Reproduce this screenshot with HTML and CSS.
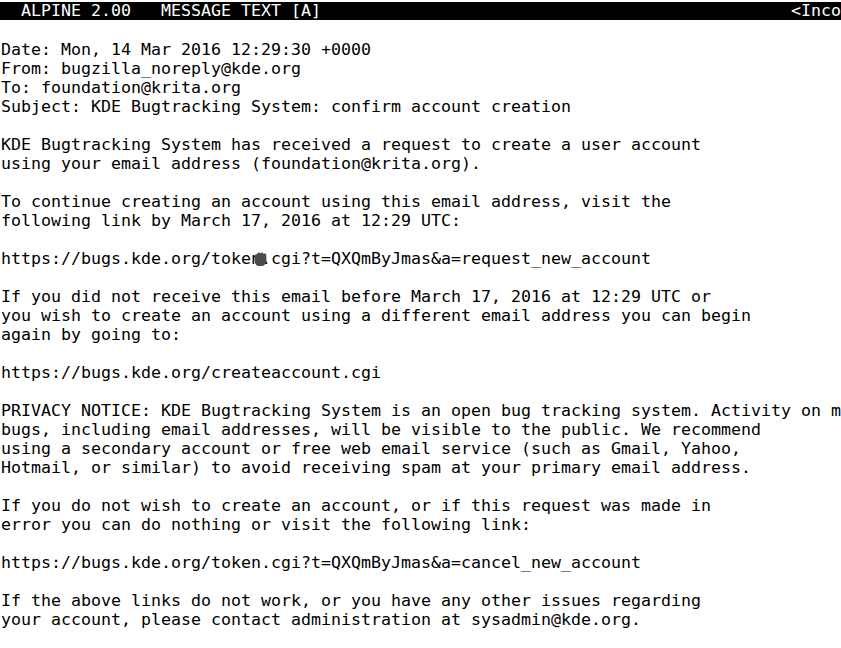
FILE: index.html
```html
<!DOCTYPE html>
<html>
<head>
<meta charset="utf-8">
<link rel="stylesheet" href="styles.css">
</head>
<body>
<div class="term">
<div class="titlebar"><span class="title">  ALPINE 2.00   MESSAGE TEXT [A]</span><span class="folder">&lt;Inco</span></div>
<div class="blank"></div>
<pre class="msg">Date: Mon, 14 Mar 2016 12:29:30 +0000
From: bugzilla_noreply@kde.org
To: foundation@krita.org
Subject: KDE Bugtracking System: confirm account creation

KDE Bugtracking System has received a request to create a user account
using your email address (foundation@krita.org).

To continue creating an account using this email address, visit the
following link by March 17, 2016 at 12:29 UTC:

https://bugs.kde.org/token<span class="cursor-host">.<svg class="cursor" width="17" height="17" viewBox="0 0 14 14" aria-hidden="true"><path d="M2.2 5.2 C2.2 3.6 3.6 3.2 4.2 3.6 C4.4 2 6.2 1.6 6.8 2.8 C7.4 1.6 9.2 1.8 9.4 3.2 C10.2 2.6 11.8 3 11.8 4.6 L11.9 8.6 C11.9 11.4 10 13.2 7.4 13.2 L6.4 13.2 C4.2 13.2 2.8 12 2.4 10.2 C2.1 9 2.2 7 2.2 5.2 Z" fill="#4b4b4b"/></svg></span>cgi?t=QXQmByJmas&amp;a=request_new_account

If you did not receive this email before March 17, 2016 at 12:29 UTC or
you wish to create an account using a different email address you can begin
again by going to:

https://bugs.kde.org/createaccount.cgi

PRIVACY NOTICE: KDE Bugtracking System is an open bug tracking system. Activity on m
bugs, including email addresses, will be visible to the public. We recommend
using a secondary account or free web email service (such as Gmail, Yahoo,
Hotmail, or similar) to avoid receiving spam at your primary email address.

If you do not wish to create an account, or if this request was made in
error you can do nothing or visit the following link:

https://bugs.kde.org/token.cgi?t=QXQmByJmas&amp;a=cancel_new_account

If the above links do not work, or you have any other issues regarding
your account, please contact administration at sysadmin@kde.org.
</pre>
</div>
</body>
</html>
```
FILE: styles.css
```css
html, body {
  margin: 0;
  padding: 0;
  background: #ffffff;
}
.term {
  width: 841px;
  height: 648px;
  overflow: hidden;
  padding-top: 2px;
  box-sizing: border-box;
  font-family: "DejaVu Sans Mono", monospace;
  font-size: 16.61px;
  line-height: 19px;
  color: #000000;
}
.titlebar {
  display: flex;
  justify-content: space-between;
  background: #000000;
  color: #ffffff;
  height: 18px;
  line-height: 18px;
  margin-bottom: 1px;
  padding-left: 1px;
  white-space: pre;
  overflow: hidden;
}
.blank {
  height: 19px;
}
.msg {
  margin: 0;
  padding-left: 1px;
  font: inherit;
  white-space: pre;
  overflow: hidden;
}
.cursor-host {
  position: relative;
}
.cursor {
  position: absolute;
  left: -9px;
  top: 1px;
}
```
